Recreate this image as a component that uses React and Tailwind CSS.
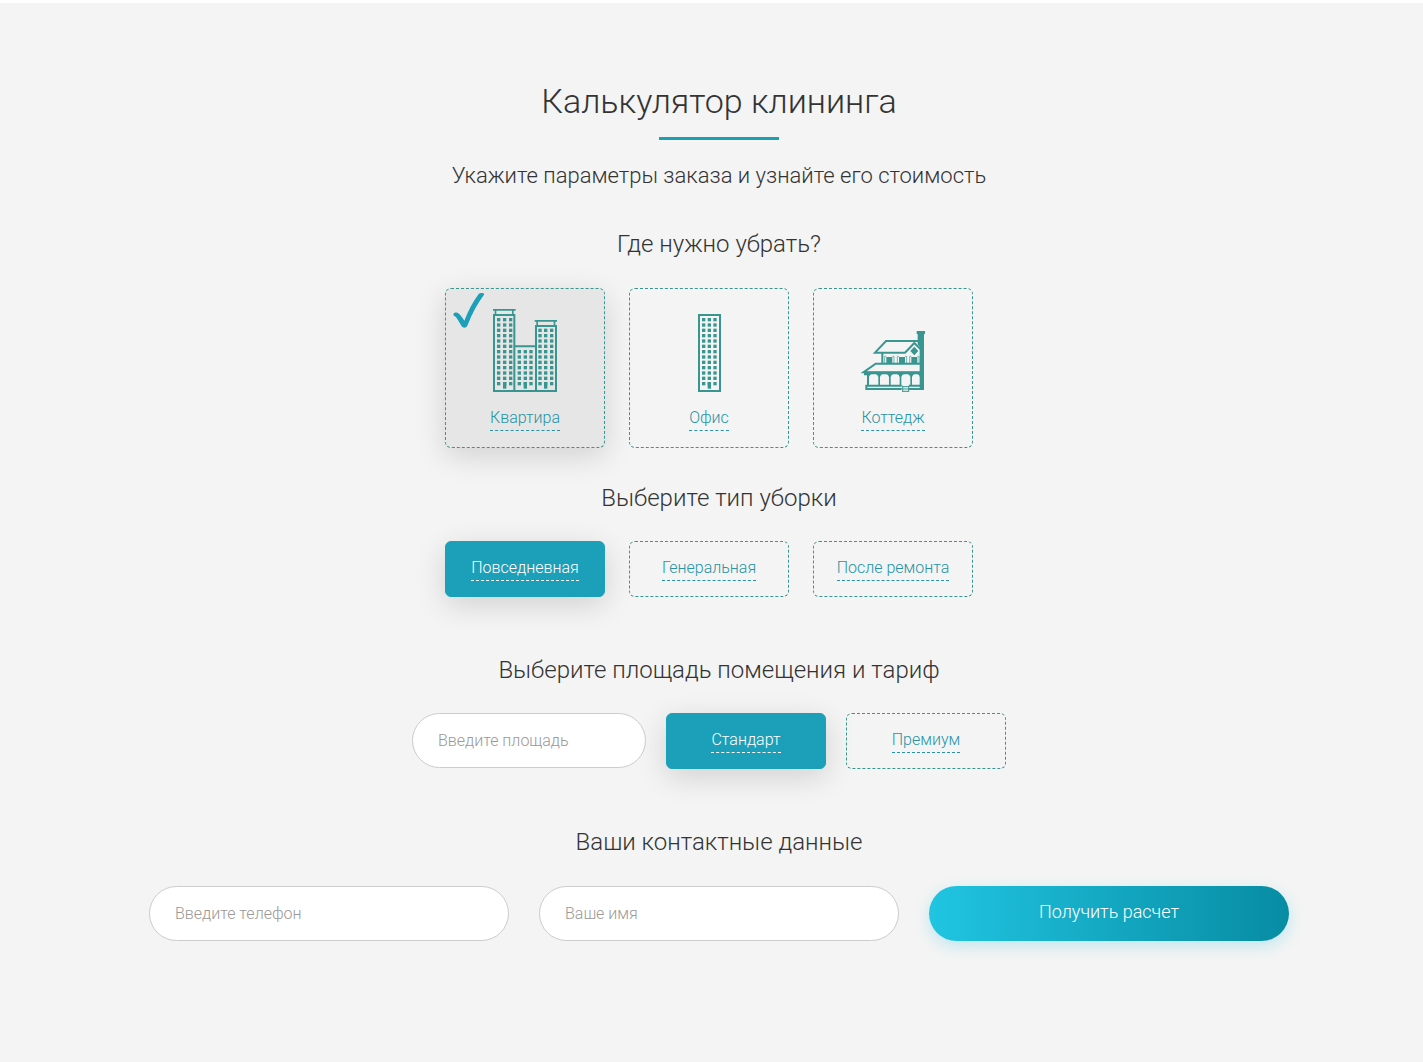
import React, { useState } from "react";

const Windows = ({ xs, y, rows }) => (
  <>
    {Array.from({ length: rows }).map((_, r) =>
      xs.map((x) => <rect key={`${r}-${x}`} x={x} y={y + r * 16} width="10" height="10" />)
    )}
    <rect x={xs[1]} y={y + (rows - 1) * 16} width="10" height="20" />
  </>
);

const ApartmentIcon = () => (
  <svg width="64" height="84" viewBox="0 0 192 252" fill="#38958f" aria-hidden="true">
    <path d="M0 3h68v5H0zM5 8h5v10H5zM57 8h5v10h-5z" />
    <path d="M125 36h67v5h-67zM130 41h5v10h-5zM182 41h5v10h-5z" />
    <g fill="none" stroke="#38958f" strokeWidth="6">
      <path d="M3 21h61v228H3zM129 54h60v195h-60zM64 115h65v134H64z" />
    </g>
    <Windows xs={[12, 30, 48]} y={30} rows={13} />
    <Windows xs={[74, 92, 109]} y={126} rows={7} />
    <Windows xs={[136, 153, 171]} y={62} rows={11} />
  </svg>
);

const OfficeIcon = () => (
  <svg width="23" height="78" viewBox="0 0 69 234" fill="#38958f" aria-hidden="true">
    <path d="M3 3h63v228H3z" fill="none" stroke="#38958f" strokeWidth="6" />
    <Windows xs={[12, 29, 46]} y={12} rows={13} />
  </svg>
);

const CottageIcon = () => (
  <svg width="64" height="61" viewBox="0 0 192 183" fill="#38958f" aria-hidden="true">
    <path d="M167 0h25v9h-3v168h-13V48l-6-8V9h-3z" />
    <g fill="none" stroke="#38958f" strokeWidth="6">
      {/* upper and lower roof */}
      <path d="M172 30H75L42 65h90l28-29 20 20" />
      <path d="M178 98H44L7 124h172" />
      <path d="M64 66v30" />
      <path d="M122 164H16v10h106M144 164h36M144 174h36" />
      <path d="M125 164v19M143 164v19M125 167h18M125 174h18M125 181h18" strokeWidth="3" />
    </g>
    <path d="M160 47l12 13-12 13-12-13z" />
    <path d="M76 78h18v20H76zM114 78h18v20h-18zM151 78h18v20h-18z" />
    <path
      d="M71 97V76h5M99 97V76h-5M109 97V76h5M137 97V76h-5M146 97V76h5M174 97V76h-5"
      fill="none"
      stroke="#38958f"
      strokeWidth="2"
    />
    {/* veranda posts and arches */}
    <path
      fillRule="evenodd"
      d="M9 122h170v42H18v-31H9zM24 164h28v-26q-2-7-8-8H32q-6 1-8 8zM57 164h27v-26q-2-7-8-8H65q-6 1-8 8zM89 164h27v-26q-2-7-8-8H97q-6 1-8 8zM121 164h27v-26q-2-7-8-8h-11q-6 1-8 8zM153 164h24v-26q-2-7-8-8h-8q-6 1-8 8z"
    />
  </svg>
);

const CheckMark = () => (
  <svg className="absolute left-[7px] top-1" width="32" height="35" viewBox="0 0 96 105" aria-hidden="true">
    <path
      d="M1 64C3 57 12 57 18 62C24 67 29 75 34 83C45 55 59 27 77 3C82 -1 95 -1 93 5C74 30 57 61 43 98C40 105 30 106 26 100C19 88 14 79 9 72C6 70 1 69 1 64Z"
      fill="#1c9fb9"
    />
  </svg>
);

const places = [
  { name: "Квартира", icon: ApartmentIcon },
  { name: "Офис", icon: OfficeIcon },
  { name: "Коттедж", icon: CottageIcon },
];
const types = ["Повседневная", "Генеральная", "После ремонта"];
const tariffs = ["Стандарт", "Премиум"];

const SectionTitle = ({ children }) => (
  <h3 className="text-center text-2xl leading-8 text-[#333]">{children}</h3>
);

const OptionButton = ({ name, active, onClick }) => (
  <button
    type="button"
    aria-pressed={active}
    onClick={onClick}
    className={`flex h-14 w-40 items-start justify-center rounded-md border pt-[13px] text-base ${
      active
        ? "border-[#1c9fb9] bg-[#1c9fb9] text-white shadow-[0_8px_30px_rgba(0,0,0,0.14)]"
        : "border-dashed border-[#38958f] text-[#2793a5]"
    }`}
  >
    <span className="border-b border-dashed border-current leading-[25px]">{name}</span>
  </button>
);

const TextField = ({ label, className, type = "text" }) => (
  <input
    type={type}
    aria-label={label}
    placeholder={label}
    className={`h-[55px] rounded-full border border-[#ccc] bg-white px-[25px] text-base text-[#333] outline-none placeholder:text-[#999] ${className}`}
  />
);

const App = () => {
  const [place, setPlace] = useState("Квартира");
  const [type, setType] = useState("Повседневная");
  const [tariff, setTariff] = useState("Стандарт");

  return (
    <div className="min-h-screen border-t-3 border-white bg-[#f4f4f4] pl-[15px] font-[Roboto,sans-serif] font-light">
      <form className="mx-auto max-w-[1140px] pt-[74px] pb-[121px]" onSubmit={(e) => e.preventDefault()}>
        <h2 className="text-center text-[34px] leading-[48px] text-[#333]">Калькулятор клининга</h2>
        <div className="mx-auto mt-3 h-[3px] w-[120px] bg-[#1c9fb1]"></div>
        <p className="mt-5 mb-9 text-center text-[22px] leading-8 text-[#333]">
          Укажите параметры заказа и узнайте его стоимость
        </p>

        <SectionTitle>Где нужно убрать?</SectionTitle>
        <div className="mt-7 mb-[34px] flex justify-center gap-6 pr-5">
          {places.map(({ name, icon: Icon }) => (
            <button
              key={name}
              type="button"
              aria-pressed={place === name}
              onClick={() => setPlace(name)}
              className={`relative flex h-40 w-40 flex-col items-center justify-end rounded-md border border-dashed border-[#38958f] pb-4 text-base text-[#2793a5] ${
                place === name ? "bg-[#e6e6e6] shadow-[0_8px_30px_rgba(0,0,0,0.14)]" : ""
              }`}
            >
              {place === name && <CheckMark />}
              <Icon />
              <span className="mt-[13px] border-b border-dashed border-current leading-[25px]">{name}</span>
            </button>
          ))}
        </div>

        <SectionTitle>Выберите тип уборки</SectionTitle>
        <div className="mt-[27px] mb-[57px] flex justify-center gap-6 pr-5">
          {types.map((t) => (
            <OptionButton key={t} name={t} active={type === t} onClick={() => setType(t)} />
          ))}
        </div>

        <SectionTitle>Выберите площадь помещения и тариф</SectionTitle>
        <div className="mt-[27px] mb-[57px] flex justify-center gap-5 pr-5">
          <TextField label="Введите площадь" className="w-[234px]" />
          {tariffs.map((t) => (
            <OptionButton key={t} name={t} active={tariff === t} onClick={() => setTariff(t)} />
          ))}
        </div>

        <SectionTitle>Ваши контактные данные</SectionTitle>
        <div className="mt-7 grid grid-cols-3 gap-[30px]">
          <TextField label="Введите телефон" type="tel" className="w-full" />
          <TextField label="Ваше имя" className="w-full" />
          <button
            type="submit"
            className="h-[55px] rounded-full bg-linear-to-r from-[#20c5e2] to-[#078ca3] pb-1 text-lg font-light text-white shadow-[0_5px_15px_rgba(32,197,226,0.25)]"
          >
            Получить расчет
          </button>
        </div>
      </form>
    </div>
  );
};

export default App;
